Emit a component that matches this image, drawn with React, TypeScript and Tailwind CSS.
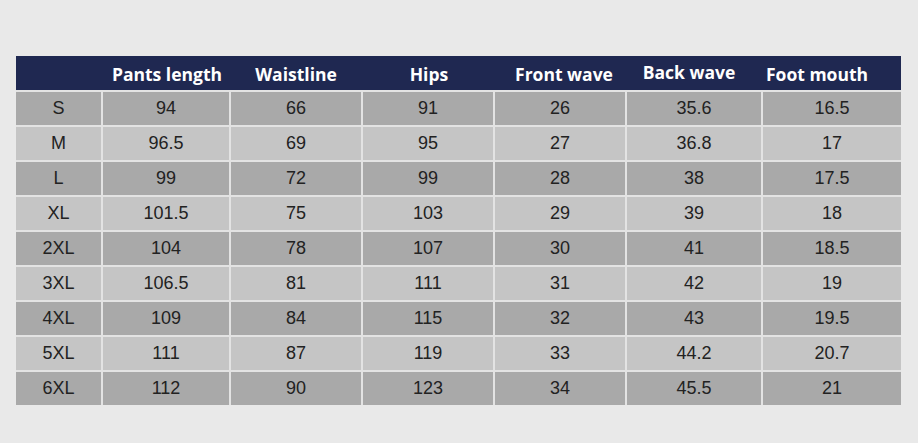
import React from "react";

const headers: { t: string; c: string }[] = [
  { t: "", c: "" },
  { t: "Pants length", c: "pl-[2px]" },
  { t: "Waistline", c: "" },
  { t: "Hips", c: "pl-[2px]" },
  { t: "Front wave", c: "pl-[8px]" },
  { t: "Back wave", c: "pr-[10px] pb-[3px]" },
  { t: "Foot mouth", c: "pr-[30px]" },
];
const rows: string[][] = [
  ["S", "94", "66", "91", "26", "35.6", "16.5"],
  ["M", "96.5", "69", "95", "27", "36.8", "17"],
  ["L", "99", "72", "99", "28", "38", "17.5"],
  ["XL", "101.5", "75", "103", "29", "39", "18"],
  ["2XL", "104", "78", "107", "30", "41", "18.5"],
  ["3XL", "106.5", "81", "111", "31", "42", "19"],
  ["4XL", "109", "84", "115", "32", "43", "19.5"],
  ["5XL", "111", "87", "119", "33", "44.2", "20.7"],
  ["6XL", "112", "90", "123", "34", "45.5", "21"],
];

const cols = "grid grid-cols-[85px_126px_130px_130px_130px_134px_138px] gap-x-[2px]";

export default function App() {
  return (
    <div className="w-[918px] h-[443px] bg-[#e9e9e9] pt-[56px] pl-[16px]">
      <div className="w-[885px] flex flex-col gap-y-[2px] bg-[#e3e3e3]">
        <div className={`${cols} h-[34px] bg-[#1f2851]`}>
          {headers.map((h, i) => (
            <div
              key={i}
              className={`flex items-center justify-center pt-[2px] text-white font-bold text-[17.5px] font-['Open_Sans',sans-serif] ${h.c}`}
            >
              {h.t}
            </div>
          ))}
        </div>
        {rows.map((r, ri) => (
          <div key={ri} className={`${cols} h-[33px]`}>
            {r.map((c, ci) => (
              <div
                key={ci}
                className={`flex items-center justify-center text-[18px] text-[#222222] font-['Liberation_Sans',Arial,sans-serif] ${
                  ri % 2 === 0 ? "bg-[#a9a9a9]" : "bg-[#c5c5c5]"
                }`}
              >
                {c}
              </div>
            ))}
          </div>
        ))}
      </div>
    </div>
  );
}
